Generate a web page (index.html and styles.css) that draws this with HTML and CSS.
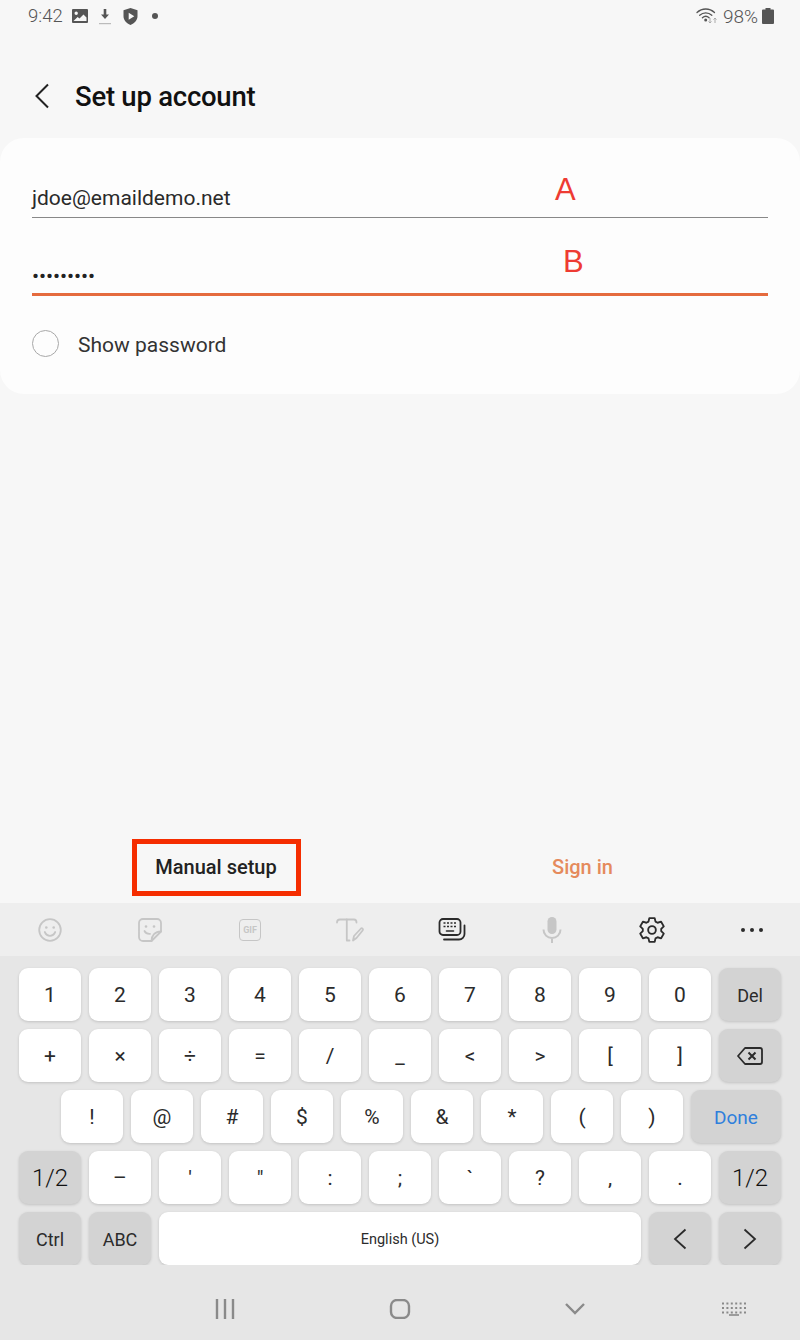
FILE: index.html
```html
<!DOCTYPE html>
<html lang="en">
<head>
  <meta charset="UTF-8" />
  <meta name="viewport" content="width=device-width, initial-scale=1.0"/>
  <title>Set up account</title>
  <link rel="stylesheet" href="styles.css">
</head>
<body>
  <div class="screen">
    <div class="status-bar">
      <div class="status-left">
        <span class="clock">9:42</span>
        <svg class="st-img" width="16" height="14" viewBox="0 0 16 14"><path fill="#555" fill-rule="evenodd" d="M1 0h14a1 1 0 0 1 1 1v12a1 1 0 0 1-1 1H1a1 1 0 0 1-1-1V1a1 1 0 0 1 1-1zm3.2 2.5a1.7 1.7 0 1 0 0 3.4 1.7 1.7 0 0 0 0-3.4zM1.5 12h13V8.5l-3-3L7.5 9.6 5.6 8z"/></svg>
        <svg class="st-dl" width="14" height="17" viewBox="0 0 14 17"><path fill="#555" d="M5.7 1h2.6v5.5h2.7L7 11 3 6.500h2.700z"/><rect x="1" y="15" width="12" height="1.200" fill="#bbb"/></svg>
        <svg class="st-shield" width="15" height="17" viewBox="0 0 15 17"><path fill="#555" fill-rule="evenodd" d="M7.500 0l7 2.300v6c0 4-3 7.200-7 8.700-4-1.500-7-4.700-7-8.700v-6zM5.700 4.700v7l5.600-3.500z"/></svg>
        <span class="st-dot"></span>
      </div>
      <div class="status-right">
        <svg width="24" height="18" viewBox="0 0 24 18"><g fill="none" stroke="#555" stroke-width="1.300" stroke-linecap="round"><path d="M1 5.500C6 .8 13.500.8 18.500 5.500"/><path d="M3.700 8.200c3.500-3.200 8.600-3.200 12.100 0"/><path d="M6.400 10.800c2-1.800 4.700-1.800 6.700 0"/></g><circle cx="9.700" cy="13" r="1.500" fill="#555"/><path d="M14 11v5m-1.500-1.500L14 16l1.500-1.500M19 16v-5m-1.500 1.500L19 11l1.500 1.500" fill="none" stroke="#aaa" stroke-width="1"/></svg>
        <span class="battery-pct">98%</span>
        <svg width="12" height="16" viewBox="0 0 12 16"><path fill="#555" d="M3.500 0h5v1.500H11a1 1 0 0 1 1 1V15a1 1 0 0 1-1 1H1a1 1 0 0 1-1-1V2.500a1 1 0 0 1 1-1h2.500z"/></svg>
      </div>
    </div>

    <header class="app-header">
      <svg class="back" width="16" height="26" viewBox="0 0 16 26"><path d="M14 1.500L2.500 13 14 24.500" fill="none" stroke="#222" stroke-width="2"/></svg>
      <h1>Set up account</h1>
    </header>

    <main class="card">
      <div class="field">jdoe@emaildemo.net</div>
      <div class="field field-active"><span class="dots">•••••••••</span></div>
      <label class="show-pass">
        <span class="radio"></span>
        <span>Show password</span>
      </label>
      <span class="mark mark-a">A</span>
      <span class="mark mark-b">B</span>
    </main>

    <div class="spacer"></div>

    <div class="actions">
      <div class="action"><span class="manual">Manual setup</span></div>
      <div class="action"><span class="sign-in">Sign in</span></div>
    </div>

    <div class="toolbar">
      <div class="tool">
        <svg width="28" height="28" viewBox="0 0 28 28"><g fill="none" stroke="#c6c6c6" stroke-width="1.800" stroke-linecap="round"><circle cx="14" cy="14" r="10.800"/><path d="M8.800 16c1.200 2.600 3.200 3.800 5.200 3.800s4-1.200 5.200-3.800"/></g><circle cx="10.300" cy="11.500" r="1.300" fill="#c6c6c6"/><circle cx="17.700" cy="11.500" r="1.300" fill="#c6c6c6"/></svg>
      </div>
      <div class="tool">
        <svg width="28" height="28" viewBox="0 0 28 28"><g fill="none" stroke="#c6c6c6" stroke-width="1.800" stroke-linecap="round" stroke-linejoin="round"><path d="M15.500 25H7a4 4 0 0 1-4-4V7a4 4 0 0 1 4-4h14a4 4 0 0 1 4 4v8.500z"/><path d="M15.500 25c0-5.500 3.500-9.500 9.500-9.500"/><path d="M8.500 15c1 2 3 3 5.500 2.800"/></g><circle cx="10" cy="10.500" r="1.300" fill="#c6c6c6"/><circle cx="18" cy="10.500" r="1.300" fill="#c6c6c6"/></svg>
      </div>
      <div class="tool">
        <div class="gif-box">GIF</div>
      </div>
      <div class="tool">
        <svg width="30" height="28" viewBox="0 0 30 28"><g fill="none" stroke="#c6c6c6" stroke-width="1.800" stroke-linecap="round" stroke-linejoin="round"><path d="M2 6.500c0-2 1-3 3-3h14c1.500 0 2.500 1 2.500 3"/><path d="M11.800 3.500V24.500h2.700"/><path d="M18 24.500l1-4.500 7-7.500c1-.8 2.500.8 1.800 1.800L21.500 22z"/></g></svg>
      </div>
      <div class="tool tool-right">
        <svg width="28" height="28" viewBox="0 0 28 28"><g fill="none" stroke="#2b2b2b" stroke-width="1.800" stroke-linecap="round"><rect x="1.500" y="3" width="21" height="16" rx="3.500"/><path d="M6 23.500h15a5.500 5.500 0 0 0 5.500-5.500V9.500"/><path d="M8.500 15h7" stroke-width="1.600"/></g><path d="M5.500 7h2M9 7h2M12.500 7h2M16 7h2M5.500 10.500h2M9 10.500h2M12.500 10.500h2M16 10.500h2" stroke="#2b2b2b" stroke-width="1.500" fill="none"/></svg>
      </div>
      <div class="tool tool-right">
        <svg width="28" height="28" viewBox="0 0 28 28"><rect x="9.500" y="1" width="9" height="17" rx="4.500" fill="#c6c6c6"/><path d="M5.500 13.500c0 5 3.800 8.500 8.500 8.500s8.500-3.500 8.500-8.500M14 22v5" fill="none" stroke="#c6c6c6" stroke-width="2"/></svg>
      </div>
      <div class="tool tool-right">
        <svg width="28" height="28" viewBox="0 0 24 24"><g fill="none" stroke="#2b2b2b" stroke-width="1.600" stroke-linejoin="round"><path d="M9.700 1.800h4.600l.7 3 1.800 1 3-.9 2.300 4-2.200 2.100v2l2.200 2.100-2.300 4-3-.9-1.800 1-.7 3H9.700l-.7-3-1.800-1-3 .9-2.300-4 2.200-2.100v-2L1.900 8.900l2.300-4 3 .9 1.800-1z"/><circle cx="12" cy="12" r="3.300"/></g></svg>
      </div>
      <div class="tool tool-right">
        <svg width="28" height="28" viewBox="0 0 28 28"><g fill="#2b2b2b"><circle cx="5" cy="14" r="2"/><circle cx="14" cy="14" r="2"/><circle cx="23" cy="14" r="2"/></g></svg>
      </div>
    </div>

    <div class="keyboard">
      <div class="key-row">
        <div class="key">1</div><div class="key">2</div><div class="key">3</div><div class="key">4</div><div class="key">5</div><div class="key">6</div><div class="key">7</div><div class="key">8</div><div class="key">9</div><div class="key">0</div>
        <div class="key key-fn key-sm">Del</div>
      </div>
      <div class="key-row">
        <div class="key">+</div><div class="key">×</div><div class="key">÷</div><div class="key">=</div><div class="key">/</div><div class="key">_</div><div class="key">&lt;</div><div class="key">&gt;</div><div class="key">[</div><div class="key">]</div>
        <div class="key key-fn">
          <svg width="26" height="20" viewBox="0 0 26 20"><path d="M8 2h15a2 2 0 0 1 2 2v12a2 2 0 0 1-2 2H8L1 10z" fill="none" stroke="#2b2b2b" stroke-width="1.800" stroke-linejoin="round"/><path d="M11.500 6.500l7 7m0-7l-7 7" fill="none" stroke="#2b2b2b" stroke-width="2"/></svg>
        </div>
      </div>
      <div class="key-row key-row-indent">
        <div class="key">!</div><div class="key">@</div><div class="key">#</div><div class="key">$</div><div class="key">%</div><div class="key">&amp;</div><div class="key">*</div><div class="key">(</div><div class="key">)</div>
        <div class="key key-fn key-done">Done</div>
      </div>
      <div class="key-row">
        <div class="key key-fn key-lg">1/2</div>
        <div class="key">–</div><div class="key">'</div><div class="key">"</div><div class="key">:</div><div class="key">;</div><div class="key">`</div><div class="key">?</div><div class="key">,</div><div class="key">.</div>
        <div class="key key-fn key-lg">1/2</div>
      </div>
      <div class="key-row">
        <div class="key key-fn key-sm">Ctrl</div>
        <div class="key key-fn key-sm">ABC</div>
        <div class="key key-space">English (US)</div>
        <div class="key key-fn">
          <svg width="14" height="22" viewBox="0 0 14 22"><path d="M12.500 1.500L2 11l10.500 9.500" fill="none" stroke="#2b2b2b" stroke-width="1.800"/></svg>
        </div>
        <div class="key key-fn">
          <svg width="14" height="22" viewBox="0 0 14 22"><path d="M1.500 1.500L12 11 1.500 20.500" fill="none" stroke="#2b2b2b" stroke-width="1.800"/></svg>
        </div>
      </div>
    </div>

    <nav class="nav-bar">
      <svg width="20" height="20" viewBox="0 0 20 20"><path d="M2 0v20M10 0v20M18 0v20" stroke="#8a8a8a" stroke-width="2.400" fill="none"/></svg>
      <svg width="22" height="20" viewBox="0 0 22 20"><rect x="2" y="1" width="18" height="18" rx="6" fill="none" stroke="#8a8a8a" stroke-width="2.400"/></svg>
      <svg width="20" height="14" viewBox="0 0 20 14"><path d="M1 2l9 9 9-9" fill="none" stroke="#8a8a8a" stroke-width="2.400"/></svg>
      <svg class="nav-kbd" width="24" height="14" viewBox="0 0 24 14"><path d="M0 1.500h24M0 6h24M0 10.500h24" stroke="#8a8a8a" stroke-width="1.800" stroke-dasharray="2 2.400" fill="none"/><path d="M7 13h10" stroke="#8a8a8a" stroke-width="1.600"/></svg>
    </nav>
  </div>
</body>
</html>
```

FILE: styles.css
```css
* {
  box-sizing: border-box;
  font-family: Roboto, "Liberation Sans", sans-serif;
}

body {
  margin: 0;
  background-color: #f7f7f7;
}

.screen {
  display: flex;
  flex-direction: column;
  height: 1340px;
  overflow: hidden;
}

/* status bar */
.status-bar {
  display: flex;
  justify-content: space-between;
  align-items: center;
  height: 32px;
  padding: 0 26px 0 28px;
  color: #555;
}

.status-left,
.status-right {
  display: flex;
  align-items: center;
}

.clock {
  font-size: 18.5px;
  font-weight: 300;
  margin-right: 9px;
}

.st-dl {
  margin-left: 10px;
}

.st-shield {
  margin-left: 11px;
}

.st-dot {
  width: 6px;
  height: 6px;
  margin-left: 14px;
  border-radius: 50%;
  background: #555;
}

.battery-pct {
  font-size: 19px;
  font-weight: 300;
  margin: 0 4px 0 3px;
}

/* header */
.app-header {
  display: flex;
  align-items: center;
  height: 106px;
  padding: 22px 0 0 34px;
}

.back {
  margin-right: 25px;
}

h1 {
  margin: 0;
  font-size: 27.5px;
  font-weight: 500;
  letter-spacing: -0.25px;
  color: #111;
}

/* form card */
.card {
  position: relative;
  height: 256px;
  padding: 0 32px;
  background: #fdfdfd;
  border-radius: 24px;
}

.field {
  display: flex;
  align-items: flex-end;
  height: 80px;
  padding-bottom: 7px;
  font-size: 21px;
  color: #2a2a2a;
  border-bottom: 1px solid #888;
}

.field-active {
  height: 78px;
  padding-bottom: 6px;
  border-bottom: 3px solid #e56b3e;
}

.dots {
  font-size: 21px;
  line-height: 22px;
  letter-spacing: -0.1px;
  color: #222;
}

.show-pass {
  display: flex;
  align-items: center;
  gap: 19px;
  margin-top: 37px;
  font-size: 21px;
  color: #333;
}

.radio {
  width: 27px;
  height: 27px;
  margin-top: -3px;
  border: 1.5px solid #a8a8a8;
  border-radius: 50%;
}

/* red letters drawn over the form */
.mark {
  position: absolute;
  font-family: "Liberation Sans", sans-serif;
  font-size: 31px;
  line-height: 36px;
  color: #ee3b33;
}

.mark-a {
  left: 555px;
  top: 34px;
}

.mark-b {
  left: 563px;
  top: 106px;
}

.spacer {
  flex: 1;
}

/* bottom actions */
.actions {
  display: flex;
  height: 65px;
  padding: 0 32px;
}

.action {
  flex: 1;
  display: flex;
  justify-content: center;
  align-items: center;
  font-size: 20px;
  font-weight: 500;
}

.manual {
  display: flex;
  justify-content: center;
  align-items: center;
  width: 169px;
  height: 57px;
  margin-bottom: 7px;
  border: 5px solid #f52d00;
  color: #222;
}

.sign-in {
  margin: 0 3px 7px 0;
  color: #e58a5c;
}

/* keyboard */
.toolbar {
  flex: none;
  display: flex;
  height: 53px;
  background: #eeeeee;
}

.tool {
  flex: none;
  display: flex;
  justify-content: center;
  align-items: center;
  width: 100px;
}

.tool-right {
  padding-left: 4px;
}

.gif-box {
  display: flex;
  justify-content: center;
  align-items: center;
  width: 22px;
  height: 22px;
  border: 1.8px solid #c6c6c6;
  border-radius: 4px;
  font-size: 9px;
  font-weight: 700;
  color: #c6c6c6;
}

.keyboard {
  flex: none;
  display: flex;
  flex-direction: column;
  gap: 8px;
  padding: 12px 19px 0;
  background: #e6e6e6;
}

.key-row {
  display: flex;
  gap: 8px;
}

.key-row-indent {
  padding-left: 42px;
}

.key {
  display: flex;
  justify-content: center;
  align-items: center;
  width: 62px;
  height: 53px;
  padding-top: 1px;
  background: #fff;
  border-radius: 9px;
  box-shadow: 0 1px 3px rgba(0, 0, 0, 0.16);
  font-size: 21px;
  color: #2b2b2b;
}

.key-fn {
  background: #d3d3d3;
}

.key-sm {
  font-size: 18px;
}

.key-lg {
  font-size: 24px;
  font-weight: 300;
  color: #111;
}

.key-done {
  width: 90px;
  font-size: 19px;
  color: #2f7fdc;
}

.key-space {
  width: 482px;
  font-size: 14.5px;
}

.nav-bar {
  flex: none;
  display: flex;
  align-items: center;
  gap: 154px;
  height: 75px;
  padding: 13px 0 0 215px;
  background: #e6e6e6;
}

.nav-kbd {
  margin-left: -17px;
}
```
